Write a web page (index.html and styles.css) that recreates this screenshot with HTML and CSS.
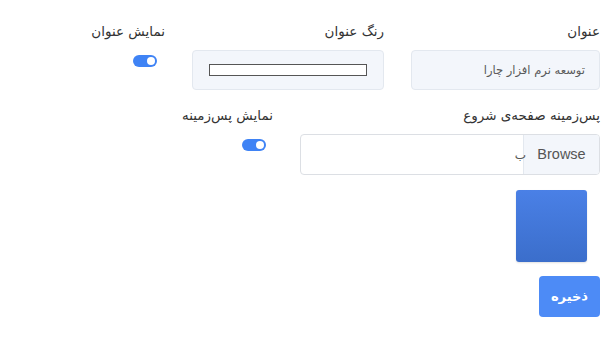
FILE: index.html
```html
<!DOCTYPE html>
<html lang="fa" dir="rtl">
<head>
<meta charset="utf-8">
<link rel="stylesheet" href="styles.css">
</head>
<body>
<form class="page">
  <div class="row row-top">
    <div class="col col-title">
      <label class="lbl">عنوان</label>
      <div class="field field-text">توسعه نرم افزار چارا</div>
    </div>
    <div class="col col-color">
      <label class="lbl">رنگ عنوان</label>
      <div class="field field-color"><span class="swatch"></span></div>
    </div>
    <div class="col col-switch">
      <label class="lbl">نمایش عنوان</label>
      <span class="switch"><span class="knob"></span></span>
    </div>
  </div>
  <div class="row row-bg">
    <div class="col col-file">
      <label class="lbl">پس‌زمینه صفحه‌ی شروع</label>
      <div class="file">
        <span class="browse">Browse</span>
        <span class="file-name">ب</span>
      </div>
    </div>
    <div class="col col-switch2">
      <label class="lbl">نمایش پس‌زمینه</label>
      <span class="switch"><span class="knob"></span></span>
    </div>
  </div>
  <div class="preview"></div>
  <button type="button" class="save">ذخیره</button>
</form>
</body>
</html>
```
FILE: styles.css
```css
* { box-sizing: border-box; }
html, body { margin: 0; padding: 0; background: #fff; }
body {
  direction: rtl;
  font-family: "DejaVu Sans", "Noto Sans", sans-serif;
  color: #333;
}
.page {
  padding: 21px 12px 0 0;
  display: flex;
  flex-direction: column;
  align-items: flex-start;
}
.row { display: flex; width: 100%; }
.col { display: flex; flex-direction: column; align-items: flex-start; }
.lbl {
  font-size: 13.5px;
  line-height: 20px;
  height: 20px;
  margin-bottom: 9px;
  color: #333;
  white-space: nowrap;
}
.col-title { width: 189px; margin-left: 27px; }
.col-color { width: 192px; margin-left: 27px; }
.col-switch { width: 160px; }
.field {
  height: 40px;
  width: 100%;
  background: #f3f6fb;
  border: 1px solid #e3e8ef;
  border-radius: 4px;
}
.field-text {
  font-size: 11.5px;
  color: #5a5a5a;
  line-height: 38px;
  padding: 0 14px;
}
.field-color { padding: 13px 16px; }
.swatch {
  display: block;
  height: 12px;
  border: 1px solid #555;
  background: #fff;
}
.switch {
  display: block;
  width: 24px;
  height: 12px;
  border-radius: 6px;
  background: #3f83f5;
  margin: 5px 8px 0 0;
  position: relative;
}
.knob {
  position: absolute;
  right: 2px;
  top: 2px;
  width: 8px;
  height: 8px;
  border-radius: 50%;
  background: #fff;
}
.row-bg { margin-top: 15px; }
.col-file { width: 300px; margin-left: 27px; }
.col-switch2 { width: 160px; }
.col-switch2 .switch { margin-right: 7px; }
.file {
  width: 100%;
  height: 41px;
  border: 1px solid #dcdfe4;
  border-radius: 4px;
  display: flex;
  align-items: stretch;
  overflow: hidden;
}
.browse {
  width: 76px;
  background: #f3f6fb;
  border-left: 1px solid #e3e8ef;
  color: #555;
  font-family: "Liberation Sans", sans-serif;
  font-size: 14.5px;
  line-height: 39px;
  text-align: center;
}
.file-name {
  font-size: 12px;
  color: #555;
  line-height: 41px;
  margin-right: -3px;
}
.preview {
  margin: 15px 13px 0 0;
  width: 71px;
  height: 72px;
  border-radius: 3px;
  background: linear-gradient(180deg, #4a80e6 0%, #3b6ecb 100%);
  box-shadow: 0 1px 2px rgba(0,0,0,0.12);
}
.save {
  margin-top: 14px;
  width: 61px;
  height: 41px;
  border: 0;
  border-radius: 4px;
  background: #4d8bf6;
  color: #fff;
  font-family: "DejaVu Sans", sans-serif;
  font-weight: bold;
  font-size: 13px;
  padding: 0;
}
```
